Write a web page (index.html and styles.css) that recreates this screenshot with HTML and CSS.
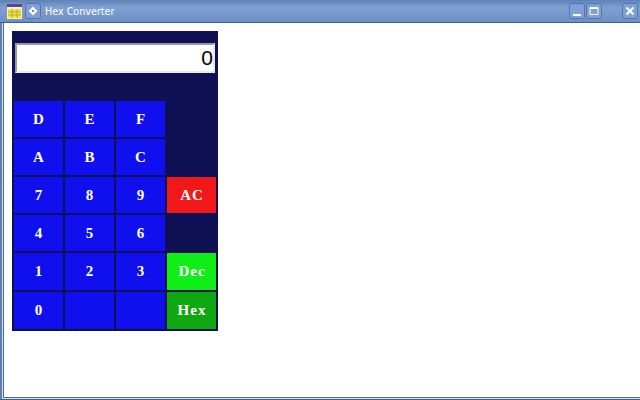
FILE: index.html
```html
<!DOCTYPE html>
<html lang="en">
<head>
    <meta charset="UTF-8">
    <meta name="viewport" content="width=device-width, initial-scale=1.0">
    <title>Hex Converter</title>
    <link rel="stylesheet" href="styles.css">
</head>
<body>

<div class="window">
    <div class="titlebar">
        <svg class="app-icon" width="17" height="17" viewBox="0 0 17 17">
            <rect x="0.5" y="0.5" width="16" height="16" fill="#f6f2d0" stroke="#8f8fa8"/>
            <rect x="1" y="1" width="15" height="3" fill="#4f46a8"/>
            <rect x="2" y="6" width="13" height="9" fill="#eee445"/>
            <path d="M2 9H15M2 12H15M6 6V15M11 6V15" stroke="#b9ad30" stroke-width="1" fill="none"/>
        </svg>
        <div class="title-btn menu-btn">
            <svg width="14" height="14" viewBox="0 0 14 14">
                <path d="M7 2.5L11.5 7L7 11.5L2.5 7Z" fill="#fff"/>
                <rect x="6" y="6" width="2" height="2" fill="#6a8fc8"/>
            </svg>
        </div>
        <span class="title-text">Hex Converter</span>
        <div class="title-btns">
            <div class="title-btn">
                <svg width="14" height="14" viewBox="0 0 14 14"><rect x="3" y="10" width="8" height="2" fill="#fff"/></svg>
            </div>
            <div class="title-btn">
                <svg width="14" height="14" viewBox="0 0 14 14"><path d="M3 3.5H11V10.5H3Z M3 4.5H11" fill="none" stroke="#fff" stroke-width="1"/></svg>
            </div>
            <div class="title-btn close-btn">
                <svg width="14" height="14" viewBox="0 0 14 14"><path d="M3.5 3.5L10.5 10.5M10.5 3.5L3.5 10.5" stroke="#fff" stroke-width="2" fill="none"/></svg>
            </div>
        </div>
    </div>

    <div class="content">
        <div class="calc">
            <input class="display" type="text" value="0" readonly>
            <div class="keys">
                <button class="key">D</button>
                <button class="key">E</button>
                <button class="key">F</button>
                <span></span>
                <button class="key">A</button>
                <button class="key">B</button>
                <button class="key">C</button>
                <span></span>
                <button class="key">7</button>
                <button class="key">8</button>
                <button class="key">9</button>
                <button class="key ac">AC</button>
                <button class="key">4</button>
                <button class="key">5</button>
                <button class="key">6</button>
                <span></span>
                <button class="key">1</button>
                <button class="key">2</button>
                <button class="key">3</button>
                <button class="key dec">Dec</button>
                <button class="key">0</button>
                <button class="key"></button>
                <button class="key"></button>
                <button class="key hex">Hex</button>
            </div>
        </div>
    </div>
</div>

</body>
</html>
```

FILE: styles.css
```css
html, body {
    margin: 0;
    height: 100%;
    overflow: hidden;
}
.window {
    width: 640px;
    height: 400px;
    box-sizing: border-box;
    display: flex;
    flex-direction: column;
    background: linear-gradient(to right, #5d7fb0 2px, #d4e0f0 2px);
    border-bottom: 1px solid #3f5f8f;
}
.titlebar {
    height: 23px;
    flex: none;
    display: flex;
    align-items: center;
    padding-left: 6px;
    background: linear-gradient(#5d83b9, #7f9fd0 35%, #6c90c6);
    border-bottom: 1px solid #3f5f8f;
    box-sizing: border-box;
    font-family: "DejaVu Sans", sans-serif;
}
.app-icon {
    flex: none;
}
.title-btn {
    width: 16px;
    height: 16px;
    display: flex;
    align-items: center;
    justify-content: center;
    background: #7f9fd6;
    border: 1px solid #5276ab;
    border-radius: 3px;
    box-sizing: border-box;
}
.menu-btn {
    margin-left: 2px;
}
.title-text {
    margin-left: 4px;
    font-size: 9.6px;
    color: #fff;
}
.title-btns {
    margin-left: auto;
    display: flex;
    gap: 1px;
    padding-right: 2px;
}
.close-btn {
    margin-left: 19px;
}
.content {
    flex: 1;
    margin: 0 0 1px 3px;
    padding: 8px 0 0 8px;
    background: #fff;
    border-left: 1px solid #4a6a94;
    border-bottom: 1px solid #4a6a94;
}
.calc {
    width: 206px;
    height: 300px;
    box-sizing: border-box;
    padding: 12px 2px 2px;
    background: #101054;
}
.display {
    display: block;
    width: 200px;
    height: 30px;
    margin: 0 0 28px 1px;
    padding: 0;
    box-sizing: border-box;
    border: 2px solid;
    border-color: #9a9a9a #e8e8e8 #e8e8e8 #9a9a9a;
    background: #fff;
    color: #000;
    font-family: "Liberation Sans", sans-serif;
    font-size: 21px;
    text-align: right;
    outline: none;
}
.keys {
    display: grid;
    grid-template-columns: repeat(4, 49px);
    grid-template-rows: repeat(4, 36px) repeat(2, 37px);
    gap: 2px;
}
.key {
    padding: 0 0 0 1px;
    border: none;
    background: #1010ee;
    color: #fff;
    font-family: "Liberation Serif", serif;
    font-size: 15px;
    font-weight: bold;
    letter-spacing: 1px;
}
.ac {
    background: #f01818;
}
.dec {
    background: #10ee18;
}
.hex {
    background: #10a810;
}
```
